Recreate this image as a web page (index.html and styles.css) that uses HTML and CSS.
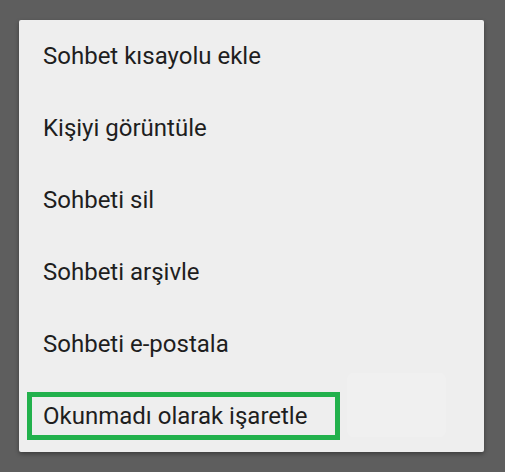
FILE: index.html
```html
<!DOCTYPE html>
<html lang="tr">
<head>
  <meta charset="UTF-8">
  <meta name="viewport" content="width=device-width, initial-scale=1.0">
  <title>Sohbet menüsü</title>
  <link rel="stylesheet" href="styles.css">
</head>
<body>
  <div class="menu-card">
    <ul class="menu-list">
      <li class="menu-item">Sohbet kısayolu ekle</li>
      <li class="menu-item">Kişiyi görüntüle</li>
      <li class="menu-item">Sohbeti sil</li>
      <li class="menu-item">Sohbeti arşivle</li>
      <li class="menu-item">Sohbeti e-postala</li>
      <li class="menu-item highlighted">
        <span class="smudge"></span>
        Okunmadı olarak işaretle
      </li>
    </ul>
  </div>
</body>
</html>
```

FILE: styles.css
```css
*, *::before, *::after {
  margin: 0;
  padding: 0;
  box-sizing: border-box;
}

body {
  font-family: Roboto, 'Noto Sans', sans-serif;
  background-color: #5e5e5e;
  width: 505px;
  height: 472px;
  padding: 20px 21px 0 19px;
  overflow: hidden;
}

.menu-card {
  background: #eeeeee;
  width: 465px;
  height: 432px;
  border-radius: 2px;
  box-shadow: 0 2px 4px rgba(0, 0, 0, 0.35);
}

.menu-list {
  list-style: none;
}

.menu-item {
  height: 72px;
  display: flex;
  align-items: center;
  padding-left: 24px;
  font-size: 24px;
  color: #1e1e1e;
  position: relative;
}

/* annotation box drawn over the last item */
.highlighted::before {
  content: '';
  position: absolute;
  left: 8px;
  top: 12px;
  width: 313px;
  height: 48px;
  border: 5px solid #22b14c;
}

.smudge {
  position: absolute;
  left: 328px;
  top: -7px;
  width: 99px;
  height: 64px;
  background: #f0f0f0;
  border-radius: 6px;
}
```
